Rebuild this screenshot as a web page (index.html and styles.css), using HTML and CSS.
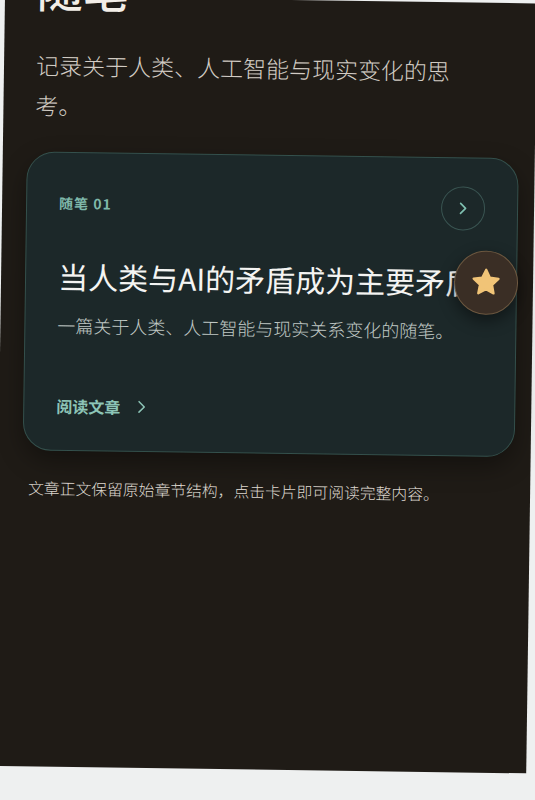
FILE: index.html
```html
<!DOCTYPE html>
<html lang="zh-CN">
<head>
  <meta charset="UTF-8" />
  <meta name="viewport" content="width=device-width, initial-scale=1.0" />
  <title>随笔</title>
  <link rel="stylesheet" href="styles.css">
</head>
<body>
  <div class="screen">
    <header class="page-head">
      <h1>随笔</h1>
      <p class="intro">记录关于人类、人工智能与现实变化的思考。</p>
    </header>

    <!-- Essay card -->
    <a class="essay-card" href="#">
      <div class="card-top">
        <span class="card-tag">随笔 01</span>
        <span class="round-btn">
          <svg viewBox="0 0 24 24" width="20" height="20"><path d="M9 6l6 6-6 6" fill="none" stroke="currentColor" stroke-width="2" stroke-linecap="round" stroke-linejoin="round"/></svg>
        </span>
      </div>
      <h2 class="card-title">当人类与AI的矛盾成为主要矛盾</h2>
      <p class="card-desc">一篇关于人类、人工智能与现实关系变化的随笔。</p>
      <div class="card-link">
        阅读文章
        <svg viewBox="0 0 24 24" width="18" height="18"><path d="M9 5l7 7-7 7" fill="none" stroke="currentColor" stroke-width="2" stroke-linecap="round" stroke-linejoin="round"/></svg>
      </div>
    </a>

    <p class="note">文章正文保留原始章节结构，点击卡片即可阅读完整内容。</p>

    <!-- floating favourite button -->
    <button class="fab" aria-label="收藏">
      <svg viewBox="0 0 24 24" width="34" height="34"><path d="M12 2.8l2.7 5.6 6.1.8-4.5 4.2 1.1 6.1L12 16.6l-5.4 2.9 1.1-6.1-4.5-4.2 6.1-.8z" fill="#f1c477" stroke="#f1c477" stroke-width="1.6" stroke-linejoin="round"/></svg>
    </button>
  </div>
</body>
</html>
```

FILE: styles.css
```css
* { box-sizing: border-box; margin: 0; padding: 0; }
body {
  background: #eef0f0;
  font-family: "Noto Sans CJK SC", "Noto Sans", sans-serif;
  overflow: hidden;
  height: 800px;
}
/* the phone screen, slightly tilted like the photo */
.screen {
  display: flow-root;
  position: relative;
  width: 532px;
  height: 770px;
  margin: -4px 0 0 5px;
  padding: 0 16px 0 24px;
  background: #1f1b16;
  color: #e8e2da;
  transform: rotate(0.8deg);
  transform-origin: 0 0;
}
.page-head {
  padding-left: 8px;
}
.page-head h1 {
  margin-top: -37px;
  font-size: 46px;
  line-height: 56px;
  font-weight: 500;
  color: #f3eee7;
}
.intro {
  margin-top: 29px;
  max-width: 440px;
  font-size: 23px;
  line-height: 40px;
  font-weight: 300;
  color: #d2ccc4;
}
/* Card */
.essay-card {
  display: block;
  margin-top: 27px;
  padding: 28px 32px 32px;
  background: #1c2829;
  border: 1px solid #34504c;
  border-radius: 28px;
  box-shadow: 0 10px 24px rgba(0,0,0,0.35);
  color: inherit;
  text-decoration: none;
}
.card-top {
  display: flex;
  align-items: center;
  justify-content: space-between;
}
.card-tag {
  font-size: 14px;
  font-weight: 700;
  letter-spacing: 1px;
  color: #7fb8aa;
}
.round-btn {
  width: 44px;
  height: 44px;
  border-radius: 50%;
  border: 1px solid #3a5552;
  display: flex;
  align-items: center;
  justify-content: center;
  color: #7fc1b1;
}
.card-title {
  margin-top: 31px;
  font-size: 30px;
  line-height: 40px;
  font-weight: 400;
  color: #f4f4f2;
  white-space: nowrap;
}
.card-desc {
  margin-top: 15px;
  font-size: 18px;
  line-height: 28px;
  font-weight: 300;
  color: #c0c8c5;
}
.card-link {
  margin-top: 55px;
  display: flex;
  align-items: center;
  gap: 12px;
  font-size: 16px;
  line-height: 24px;
  font-weight: 700;
  color: #8cc4b6;
}
.note {
  margin-top: 26px;
  padding-left: 6px;
  font-size: 15.8px;
  line-height: 24px;
  font-weight: 300;
  color: #ddd7cf;
}
/* floating star button over the card */
.fab {
  position: absolute;
  left: 453px;
  top: 248px;
  width: 64px;
  height: 64px;
  border-radius: 50%;
  background: #3a2e25;
  border: 1.5px solid #6d5840;
  box-shadow: 0 6px 16px rgba(0,0,0,0.45);
  display: flex;
  align-items: center;
  justify-content: center;
  cursor: pointer;
}
```
